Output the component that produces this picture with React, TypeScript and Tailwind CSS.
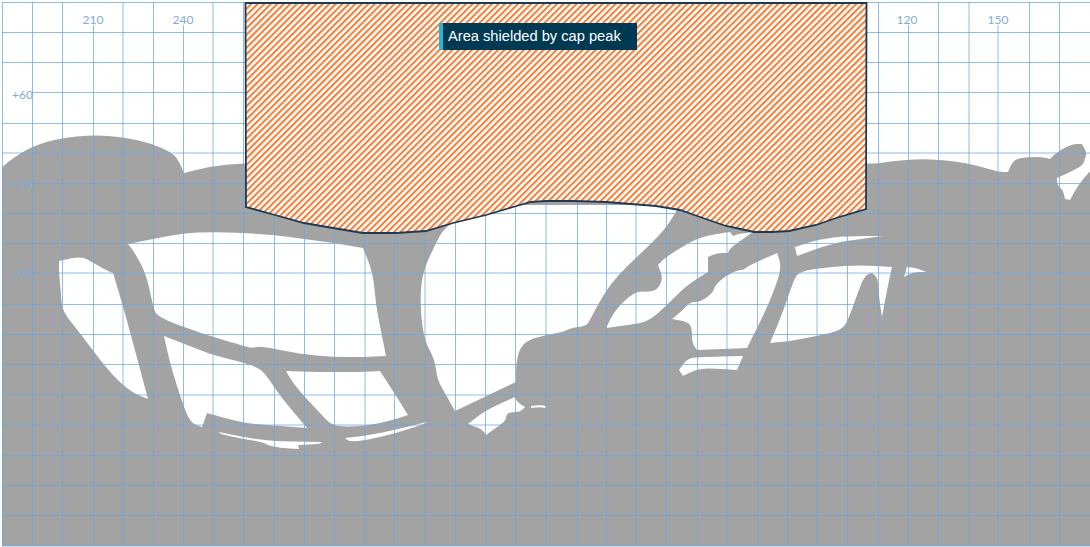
const OUTER =
  "2,167 13,158 33,146 60,138 93,135 123,137 150,143 173,153 180,163 183.7,173 213,166 243,163 300,162 866,165 893,161 919,159 943,160 966,163 986,168 999,172 1008,172 1010,167 1015,159 1028,157 1042,157 1050,159 1057,152 1072,144 1082,144 1087,153 1085,158 1083,166 1057,178 1057,185 1063,190 1065,199 1070,200 1077,187 1088,173 1090,172 1090,546 2,546 2,169";

const HOLES = [
  // mid window, running up under the hatched area
  "450,205 680,205 665,230 637,257 618,275 603,295 590,320 586,326 571,328 563,332 546,335 528,340 520,348 516,363 516,382 455,411 446,395 437,379 435,360 424,340 420,305 422,273 436,243 443,230 453,222",
  // left quarter window
  "59,261 82,256 93,263 110,272 113,273 123,306 133,343 148,399 133,393 117,380 100,360 80,333 62,311 61,293 59,273",
  // upper main window
  "128,244 183,233 213,232 243,233 275,235 304,239 334,243 363,248 373,273 376,305 380,326 386,356 363,357 333,357 300,354 260,346 253,348 247,347 200,333 157,317 153,306 146,273 133,250",
  // lower left window
  "164,336 200,350 213,355 257,366 267,376 280,396 307,428 267,425 243,423 207,413 202,427 190,423 180,396 170,363",
  // lower centre window
  "286,371 317,372 363,372 380,371 393,391 408,415 396,419 380,423 363,426 333,427 320,413 303,395 293,383",
  // thin slits
  "219,432 263,441 322,442 320,444 298,445 299,449 280,448 267,445 263,442 243,439 220,434",
  "345,438 363,436 390,431 427,422 425,423.5 397,433 367,440 350,442",
  // engine-side cutouts
  "468,424 486,410 515,397 517,402 525,407 520,412 510,412 506,415 506,420 500,425 486,435 482,429 473,426",
  "531,406 540,405 546,406 545,408 540,407 531,408",
  // right side windows
  "606,328 615,310 635,291 650,292 658,289 663,278 658,265 665,258 680,248 700,237 723,233 730,232 733,236 738,234 753,232 730,248 728,253 717,253 708,257 708,272 687,285 667,305 648,322 628,325",
  "672,319 683,310 690,302 700,302 713,293 715,285 727,275 738,270 743,270 750,265 777,253 781,265 778,280 768,305 760,322 755,332 747,348 697,350 692,343 692,328 688,322",
  "687,359 697,357 743,356 737,370 707,368 695,370 683,376 679,370",
  "795,247 820,239 847,236 883,236 860,239 833,243 797,256",
  "799,271 830,267 860,265 892,267 888,285 882,317 879,298 878,278 872,273 865,275 858,292 850,315 843,330 817,336 790,341 770,343 783,312 793,282",
  "907,267 917,268 926,272 913,272 904,277",
];

const HATCH =
  "245.5,3 866.5,3 866,209 836,218 816,225 789,231 772,232 754,232 736,228 726,226 700,217 680,210 656,206 606,202 573,201 546,201 531,202 513,207 486,215 453,223 426,231 396,233 363,233 333,228 304,223 275,215 246,207";

// Closed outline through the traced points: gentle bends become curves, real corners stay sharp.
function toPath(p: string) {
  const pts = p.split(" ").map((s) => s.split(",").map(Number));
  const n = pts.length;
  const mid = (a: number[], b: number[]) => `${(a[0] + b[0]) / 2},${(a[1] + b[1]) / 2}`;
  let d = "M" + mid(pts[n - 1], pts[0]);
  for (let i = 0; i < n; i++) {
    const prev = pts[(i + n - 1) % n];
    const cur = pts[i];
    const next = pts[(i + 1) % n];
    const a = Math.atan2(cur[1] - prev[1], cur[0] - prev[0]);
    const b = Math.atan2(next[1] - cur[1], next[0] - cur[0]);
    let turn = Math.abs(a - b);
    if (turn > Math.PI) turn = 2 * Math.PI - turn;
    d += turn > 0.95 ? `L${cur}L${mid(cur, next)}` : `Q${cur} ${mid(cur, next)}`;
  }
  return d + "Z";
}

const VERTICAL = [
  2.5, 32.5, 62.5, 123, 153.5, 213, 243.5, 274.5, 304.5, 334.5, 365, 394.5, 425, 455.5, 485.5, 515.5, 546,
  577.5, 606.5, 636, 666.5, 697.5, 727, 757.5, 787.5, 817, 847.5, 878.5, 938.5, 969, 1029.5, 1059.5,
];
const TICKED = [93.5, 183.5, 908.5, 998];
const HORIZONTAL = [2.5, 32.5, 62.5, 123.5, 153, 213.5, 243.5, 304.5, 334.5, 364.5, 395, 425, 455.5, 485.5, 515.5, 546];
const LABELLED = [92.5, 183.5, 273];

const X_LABELS: [string, number][] = [["210", 93], ["240", 183], ["120", 907], ["150", 998]];
const Y_LABELS: [string, number][] = [["+60", 99], ["+30", 189], ["+00", 278]];

export default function App() {
  return (
    <div className="relative h-[547px] w-[1090px] overflow-hidden bg-white">
      <svg width={1090} height={547} viewBox="0 0 1090 547" className="block">
        <defs>
          <pattern id="hatch" width="4.6" height="4.6" patternUnits="userSpaceOnUse" patternTransform="rotate(45)">
            <rect width="4.6" height="4.6" fill="#ffffff" />
            <rect width="2.1" height="4.6" fill="#f0803a" />
          </pattern>
        </defs>

        <path d={toPath(OUTER) + HOLES.map(toPath).join("")} fill="#a3a3a3" fillRule="evenodd" />

        <g stroke="#6aa5e0" strokeOpacity={0.75} strokeWidth={1}>
          {VERTICAL.map((x) => (
            <line key={x} x1={x} x2={x} y1={2} y2={546} />
          ))}
          {TICKED.map((x) => (
            <line key={x} x1={x} x2={x} y1={25} y2={546} />
          ))}
          {HORIZONTAL.map((y) => (
            <line key={y} x1={2} x2={1090} y1={y} y2={y} />
          ))}
          {LABELLED.map((y) => (
            <line key={y} x1={32} x2={1090} y1={y} y2={y} />
          ))}
        </g>

        <g className="fill-[#7fabdc] text-[12px] font-[family-name:Lato,sans-serif]">
          {X_LABELS.map(([t, x]) => (
            <text key={t} x={x} y={24} textAnchor="middle">
              {t}
            </text>
          ))}
          {Y_LABELS.map(([t, y]) => (
            <text key={t} x={12} y={y}>
              {t}
            </text>
          ))}
        </g>

        <polygon points={HATCH} fill="url(#hatch)" stroke="#1d3a52" strokeWidth={1.8} strokeLinejoin="miter" />
      </svg>

      <div className="absolute left-[439px] top-[23px] flex h-[27px] w-[198px] items-center border-l-4 border-[#2bb3d0] bg-[#003a52] pl-[5px] font-[family-name:'Liberation_Sans',Arial,sans-serif] text-[14.67px] leading-none text-white">
        Area shielded by cap peak
      </div>
    </div>
  );
}
